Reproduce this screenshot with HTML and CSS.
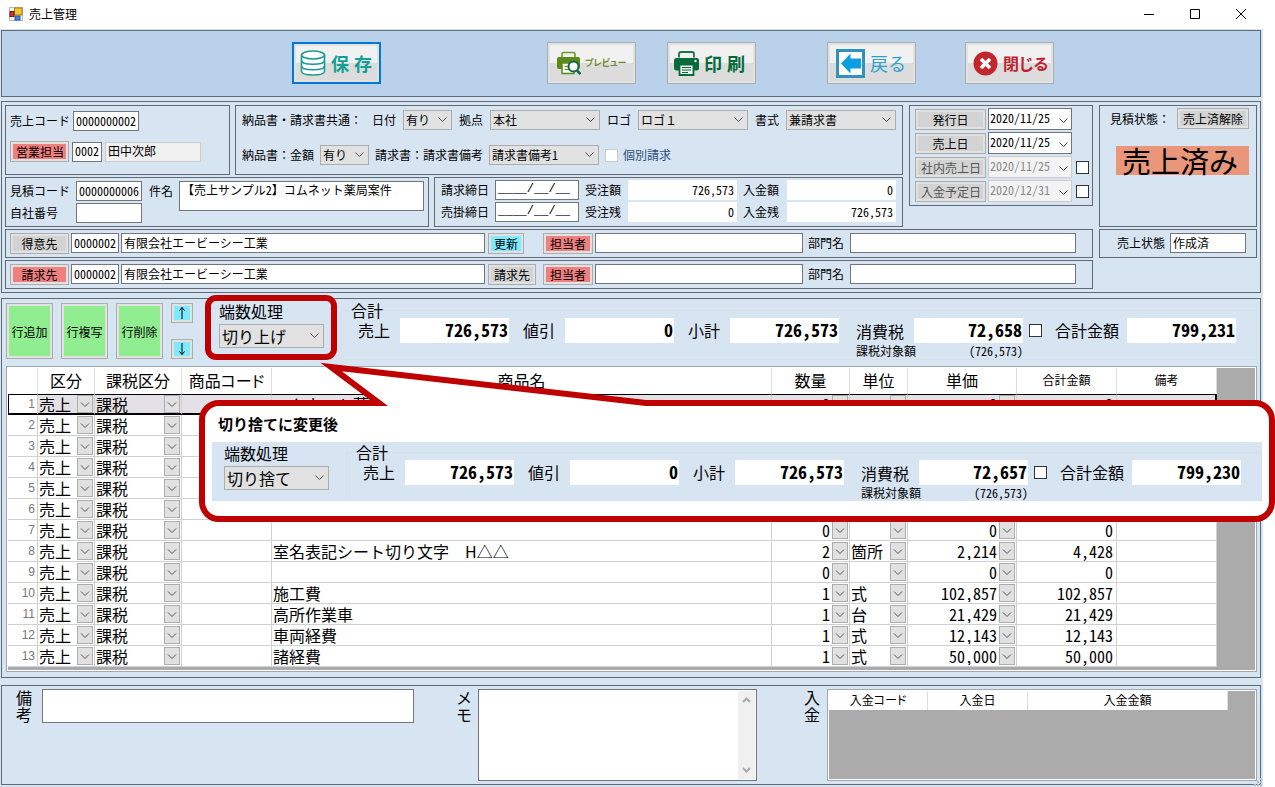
FILE: index.html
```html
<!DOCTYPE html>
<html lang="ja">
<head>
<meta charset="utf-8">
<title>売上管理</title>
<link rel="stylesheet" href="styles.css">
</head>
<body>
<div class="page">
<header class="titlebar">
  <svg class="app-icon" width="14" height="14" viewBox="0 0 14 14"><rect x=".5" y=".5" width="13" height="13" fill="#f4f4f4" stroke="#b5b5b5"/><rect x="5.500" y="1" width="7.500" height="7" fill="#f6c52b" stroke="#a87c14"/><rect x="1" y="4.500" width="4" height="5" fill="#c0392b" stroke="#7d1c12"/><rect x="6" y="9" width="5" height="4" fill="#4f86dd" stroke="#2b56a0"/></svg>
  <h1>売上管理</h1>
  <div class="window-buttons">
    <button aria-label="最小化"><svg width="12" height="12" viewBox="0 0 12 12"><path d="M1 6.500H11"/></svg></button>
    <button aria-label="最大化"><svg width="12" height="12" viewBox="0 0 12 12"><path d="M1.500 1.500H10.500V10.500H1.500Z"/></svg></button>
    <button aria-label="閉じる"><svg width="12" height="12" viewBox="0 0 12 12"><path d="M1 1L11 11M11 1L1 11"/></svg></button>
  </div>
</header>

<main class="window">
<nav class="toolbar">
  <button class="tool tool-save"><svg width="26" height="26" viewBox="0 0 26 26" fill="#fff" stroke="#1a9c92" stroke-width="1.600"><path d="M1.500 5V21C1.500 23.500 6 25 13 25S24.500 23.500 24.500 21V5"/><path d="M1.500 10.500C1.500 13 6 14.200 13 14.200S24.500 13 24.500 10.500M1.500 16C1.500 18.500 6 19.700 13 19.700S24.500 18.500 24.500 16" fill="none"/><ellipse cx="13" cy="5" rx="11.500" ry="4"/></svg><span>保</span><span>存</span></button>
  <button class="tool tool-preview"><svg width="24" height="24" viewBox="0 0 24 24"><path d="M5 6V3Q5 1.500 6.500 1.500H16.500Q18 1.500 18 3V6" fill="none" stroke="#6d9a2c" stroke-width="1.600"/><rect x="0" y="6" width="23" height="12" rx="2" fill="#5d8a1c"/><path d="M5 12H17V22.500H5Z" fill="#f5f7ee" stroke="#5d8a1c" stroke-width="1.500"/><path d="M7.500 15.500H12M7.500 18.500H12" stroke="#5d8a1c"/><circle cx="16.500" cy="15.500" r="5" fill="#fff" stroke="#0e6b42" stroke-width="2"/><path d="M20 19.500L23.500 23" stroke="#0e6b42" stroke-width="2.500"/></svg><span>プレビュー</span></button>
  <button class="tool tool-print"><svg width="25" height="25" viewBox="0 0 25 25"><path d="M5 6.500V3Q5 1 7 1H18Q20 1 20 3V6.500" fill="none" stroke="#17764a" stroke-width="1.800"/><rect x="0" y="7" width="25" height="12.500" rx="2.500" fill="#066a3a"/><circle cx="21.500" cy="10" r="1.200" fill="#fff"/><path d="M5.500 13.500H19.500V24H5.500Z" fill="#eef4ef" stroke="#066a3a" stroke-width="1.800"/><path d="M8 16.500H17M8 19H17M8 21.500H14" stroke="#066a3a"/></svg><span>印</span><span>刷</span></button>
  <button class="tool tool-back"><svg width="29" height="29" viewBox="0 0 29 29"><rect x="1.500" y="1.500" width="26" height="26" fill="#fff" stroke="#2f94bd" stroke-width="3"/><path d="M5 14.500L14.500 4.500V9.500H25V19.500H14.500V24.500Z" fill="#0b9ee0"/></svg><span>戻る</span></button>
  <button class="tool tool-close"><svg width="25" height="25" viewBox="0 0 25 25"><circle cx="12.500" cy="12.500" r="12" fill="#c1272d"/><path d="M8 8L17 17M17 8L8 17" stroke="#fff" stroke-width="3.600"/></svg><span>閉じる</span></button>
</nav>

<section class="panel header-panel">
  <div class="header-main">
    <div class="header-top">
      <div class="header-left">
        <div class="header-line">
          <div class="box box-code">
            <div class="line"><label for="sales-code">売上コード</label><input id="sales-code" class="w66 num" value="0000000002"></div>
            <div class="line"><button class="btn red w59">営業担当</button><input class="w30 num" aria-label="営業担当コード" value="0002"><input class="readonly w96" aria-label="営業担当名" readonly value="田中次郎"></div>
          </div>
          <div class="box box-docs">
            <div class="line"><span class="doc-head">納品書・請求書共通：</span><label for="s1">日付</label><select id="s1" class="w49"><option>有り</option></select><label for="s2">拠点</label><select id="s2" class="w110"><option>本社</option></select><label for="s3">ロゴ</label><select id="s3" class="w110"><option>ロゴ１</option></select><label for="s4">書式</label><select id="s4" class="w110"><option>兼請求書</option></select></div>
            <div class="line tight"><label for="s5">納品書：金額</label><select id="s5" class="w49"><option>有り</option></select><label for="s6">請求書：請求書備考</label><select id="s6" class="w110 num"><option>請求書備考1</option></select><label class="check-label"><input type="checkbox" class="light">個別請求</label></div>
          </div>
        </div>
        <div class="header-line">
          <div class="box box-estimate">
            <label for="est">見積コード</label><input id="est" class="num" value="0000000006"><label for="subject">件名</label><textarea id="subject" class="num">【売上サンプル2】コムネット薬局案件</textarea>
            <label for="own">自社番号</label><input id="own">
          </div>
          <div class="box box-balance">
            <label for="d1">請求締日</label><input id="d1" class="mask" value="____/__/__"><label for="a1">受注額</label><input id="a1" class="amount num" value="726,573"><label for="a2">入金額</label><input id="a2" class="amount num" value="0">
            <label for="d2">売掛締日</label><input id="d2" class="mask" value="____/__/__"><label for="a3">受注残</label><input id="a3" class="amount num" value="0"><label for="a4">入金残</label><input id="a4" class="amount num" value="726,573">
          </div>
        </div>
      </div>
      <div class="box box-dates">
        <div class="line"><button class="btn gray w71">発行日</button><select class="date num" aria-label="発行日"><option>2020/11/25</option></select></div>
        <div class="line"><button class="btn gray w71">売上日</button><select class="date num" aria-label="売上日"><option>2020/11/25</option></select></div>
        <div class="line"><button class="btn gray w71" disabled>社内売上日</button><select class="date num" aria-label="社内売上日" disabled><option>2020/11/25</option></select><input type="checkbox" aria-label="社内売上日を指定"></div>
        <div class="line"><button class="btn gray w71" disabled>入金予定日</button><select class="date num" aria-label="入金予定日" disabled><option>2020/12/31</option></select><input type="checkbox" aria-label="入金予定日を指定"></div>
      </div>
    </div>
    <div class="box box-party">
      <button class="btn gray w59">得意先</button><input class="w48 num" aria-label="得意先コード" value="0000002"><input class="party-name" aria-label="得意先名" value="有限会社エービーシー工業"><div class="party-action"><button class="btn cyan">更新</button></div><button class="btn red w50">担当者</button><input class="w208" aria-label="担当者"><label for="p1">部門名</label><input id="p1" class="w226">
    </div>
    <div class="box box-party">
      <button class="btn red w59">請求先</button><input class="w48 num" aria-label="請求先コード" value="0000002"><input class="party-name" aria-label="請求先名" value="有限会社エービーシー工業"><div class="party-action"><button class="btn gray">請求先</button></div><button class="btn red w50">担当者</button><input class="w208" aria-label="請求先担当者"><label for="p2">部門名</label><input id="p2" class="w226">
    </div>
  </div>
  <div class="header-side">
    <div class="box box-status">
      <div class="line"><span>見積状態：</span><button class="btn gray">売上済解除</button></div>
      <strong>売上済み</strong>
    </div>
    <div class="box box-state"><label for="state">売上状態</label><input id="state" value="作成済"></div>
  </div>
</section>

<section class="panel detail-panel">
  <div class="detail-top">
    <div class="row-buttons">
      <button class="btn green">行追加</button><button class="btn green">行複写</button><button class="btn green">行削除</button>
      <div class="arrows"><button class="btn cyan" aria-label="上へ"><svg width="10" height="14" viewBox="0 0 10 14"><path d="M5 1.500V13M2.500 4.500L5 1.500L7.500 4.500"/></svg></button><button class="btn cyan" aria-label="下へ"><svg width="10" height="14" viewBox="0 0 10 14"><path d="M5 1V12.500M2.500 9.500L5 12.500L7.500 9.500"/></svg></button></div>
    </div>
    <div class="totals">
      <div class="rounding"><label for="round1">端数処理</label><select id="round1"><option>切り上げ</option></select><div class="highlight"></div></div>
      <fieldset><legend>合計</legend>
        <div class="sums">
          <label for="t1">売上</label><input id="t1" class="num" value="726,573"><label for="t2">値引</label><input id="t2" class="num" value="0"><label for="t3">小計</label><input id="t3" class="num" value="726,573">
          <div class="tax"><label for="t4">消費税</label><input id="t4" class="num" value="72,658"><span>課税対象額</span><span class="num taxable">(726,573)</span></div>
          <input type="checkbox" aria-label="消費税を手入力"><label class="grand" for="t5">合計金額</label><input id="t5" class="num" value="799,231">
        </div>
      </fieldset>
    </div>
  </div>
  <div class="grid">
    <table class="items">
      <colgroup><col class="c30"><col class="c57"><col class="c87"><col class="c90"><col><col class="c78"><col class="c58"><col class="c109"><col class="c100"><col class="c100"></colgroup>
      <thead><tr><th></th><th>区分</th><th>課税区分</th><th>商品コード</th><th>商品名</th><th>数量</th><th>単位</th><th>単価</th><th class="small">合計金額</th><th class="small">備考</th></tr></thead>
      <tbody id="item-rows"></tbody>
    </table>
  </div>
</section>

<section class="panel notes-panel">
  <label class="vertical" for="remarks">備考</label><textarea id="remarks"></textarea>
  <label class="vertical memo-label" for="memo">メモ</label>
  <div class="memo"><textarea id="memo"></textarea><div class="scrollbar"><svg width="9" height="6" viewBox="0 0 9 6"><path d="M1 5L4.500 1.500L8 5"/></svg><svg width="9" height="6" viewBox="0 0 9 6"><path d="M1 1L4.500 4.500L8 1"/></svg></div></div>
  <span class="vertical payment-label">入金</span>
  <div class="payments"><table><colgroup><col class="c99"><col class="c100"><col></colgroup><thead><tr><th>入金コード</th><th>入金日</th><th>入金金額</th></tr></thead></table></div>
</section>
<svg class="grip" width="8" height="8" viewBox="0 0 8 8"><path d="M6 0h2v2h-2zM3 3h2v2h-2zM6 3h2v2h-2zM0 6h2v2h-2zM3 6h2v2h-2zM6 6h2v2h-2z"/></svg>
</main>

<aside class="callout">
  <svg class="tail" width="350" height="50" viewBox="311 356 350 50"><path d="M331 367L383 406H646V403Z" fill="#fff"/><path d="M387 409L331 367L646 403H650" fill="none" stroke="#bf0000" stroke-width="6" stroke-miterlimit="8"/></svg>
  <h2>切り捨てに変更後</h2>
  <div class="totals">
    <div class="rounding"><label for="round2">端数処理</label><select id="round2"><option>切り捨て</option></select></div>
    <fieldset><legend>合計</legend>
      <div class="sums">
        <label for="u1">売上</label><input id="u1" class="num" value="726,573"><label for="u2">値引</label><input id="u2" class="num" value="0"><label for="u3">小計</label><input id="u3" class="num" value="726,573">
        <div class="tax"><label for="u4">消費税</label><input id="u4" class="num" value="72,657"><span>課税対象額</span><span class="num taxable">(726,573)</span></div>
        <input type="checkbox" aria-label="変更後の消費税を手入力"><label class="grand" for="u5">合計金額</label><input id="u5" class="num" value="799,230">
      </div>
    </fieldset>
  </div>
</aside>
</div>
<script src="app.js"></script>
</body>
</html>
```
FILE: styles.css
```css
* { box-sizing: border-box; }
body { margin: 0; background: #fff; color: #000; font: 12px/16px "Noto Sans CJK JP", sans-serif; }
button, input, select, textarea { font: inherit; color: inherit; margin: 0; border-radius: 0; }
label, span, th, h1, h2, legend, button { white-space: nowrap; }
.num { font-feature-settings: "hwid"; }
.page { position: relative; }

/* title bar */
.titlebar { display: flex; align-items: center; height: 29px; padding: 0 28px 2px 9px; gap: 6px; }
.titlebar h1 { margin: 0; font-size: 12px; font-weight: 400; flex: 1; }
.window-buttons { display: flex; gap: 34px; }
.window-buttons button { display: block; border: 0; padding: 0; background: none; width: 12px; height: 12px; }
.window-buttons svg { display: block; fill: none; stroke: #000; }

.window { position: relative; margin-right: 12px; padding: 1px 2px 2px 1px; background: #d7e4f1; }
.grip { position: absolute; right: 1px; bottom: 1px; fill: #b5bcc4; }

/* toolbar */
.toolbar { display: flex; height: 67px; padding: 11px 0 0 290px; border: 1px solid #5f6a75; background: #b9d1ea; margin-bottom: 4px; }
.tool { display: flex; align-items: center; width: 89px; height: 42px; padding: 0 6px; gap: 5px; border: 1px solid #adadad; box-shadow: inset 0 0 0 2px #e1e1e1; background: linear-gradient(#f1f1f1 50%, #dcdcdc 50%); font-size: 18px; line-height: 20px; font-weight: 700; }
.tool svg { flex: none; }
.tool-save { border: 2px solid #0078d7; color: #12a195; }
.tool-preview { margin-left: 166px; padding-left: 9px; gap: 4px; font-size: 9px; color: #6d8f2c; font-feature-settings: "palt"; }
.tool-print { margin-left: 31px; color: #066a3a; }
.tool-back { margin-left: 71px; padding-left: 8px; font-weight: 400; color: #2a9fd0; }
.tool-close { margin-left: 49px; padding-left: 7px; color: #be2430; font-size: 16px; font-feature-settings: "palt"; }

/* shared controls */
.panel { border: 1px solid #5f6a75; }
.box { border: 1px solid #5f6a75; }
.line { display: flex; align-items: center; }
input, textarea { border: 1px solid #70767c; background: #fff; padding: 0 2px 2px; height: 20px; min-width: 0; outline: 0; }
textarea { resize: none; display: block; }
input.readonly { background: #f0f0f0; border: 1px solid #ccc; }
input[type=checkbox] { appearance: none; flex: none; width: 13px; height: 13px; padding: 0; border: 1px solid #333; background: #fff; }
input[type=checkbox].light { border-color: #ccc; }
select { appearance: none; height: 20px; padding: 0 16px 0 2px; border: 1px solid #adadad; background: #e1e1e1 url("data:image/svg+xml,%3Csvg xmlns='http://www.w3.org/2000/svg' width='9' height='6'%3E%3Cpath d='M.5 .5L4.500 4.500L8.500 .5' fill='none' stroke='%23555'/%3E%3C/svg%3E") no-repeat right 4px center; }
.btn { height: 21px; padding: 0 5px; border: 1px solid #adadad; box-shadow: inset 0 0 0 2px #e1e1e1; line-height: 17px; flex: none; }
.gray { background: #d3d3d3; }
.red { background: #f08080; }
.cyan { background: #7feaff; }
.green { background: #90ee90; }
.w30 { width: 30px; } .w48 { width: 48px; } .w49 { width: 49px; } .w50 { width: 50px; } .w59 { width: 59px; }
.w66 { width: 66px; } .w71 { width: 71px; } .w96 { width: 96px; } .w110 { width: 110px; }
.w208 { width: 208px; } .w226 { width: 226px; }

/* header */
.header-panel { display: flex; gap: 6px; padding: 3px; margin-bottom: 5px; }
.header-main { flex: 1; min-width: 0; display: flex; flex-direction: column; gap: 2px; }
.header-top { display: flex; align-items: flex-start; gap: 6px; }
.header-left { flex: 1; min-width: 0; display: flex; flex-direction: column; gap: 2px; }
.header-line { display: flex; gap: 5px; }
.box-code { width: 225px; height: 70px; padding: 5px 4px; display: flex; flex-direction: column; gap: 10px; }
.box-code .line { gap: 3px; }
.box-docs { flex: 1; padding: 4px 6px; display: flex; flex-direction: column; gap: 15px; }
.box-docs .line { gap: 7px; }
.box-docs .tight { gap: 6px; }
.doc-head { margin-right: 3px; }
.check-label { display: flex; align-items: center; gap: 5px; color: #2b4f7d; }
.box-estimate { width: 425px; height: 50px; padding: 3px 4px; display: grid; grid-template: 20px 20px / 66px 66px 30px 1fr; column-gap: 0; row-gap: 2px; align-items: center; }
.box-estimate label[for=subject] { margin-left: 7px; }
.box-estimate textarea { grid-row: 1 / 3; grid-column: 4; align-self: start; height: 30px; margin-left: 7px; line-height: 15px; }
.box-balance { flex: 1; padding: 2px 6px; display: grid; grid-template: 20px 20px / 54px 84px 49px 109px 50px 1fr; row-gap: 2px; align-items: center; }
.box-balance label[for^=a] { margin-left: 6px; }
.mask { font-family: "Liberation Mono", monospace; font-size: 12px; }
.amount { border-color: #fff; text-align: right; }
.box-balance .amount { width: 109px; }
.box-dates { width: 184px; padding: 2px 3px 3px 5px; display: flex; flex-direction: column; gap: 2px; }
.box-dates .line { height: 22px; gap: 2px; }
.date { width: 84px; height: 22px; background-color: #fff; border-color: #70767c; padding: 0 0 3px 1px; background-position: right 3px bottom 5px; }
.date:disabled { border-color: #ccc; color: #8a8a8a; background-color: #f3f3f3; opacity: 1; }
.btn:disabled { color: #555; }
.box-dates input[type=checkbox] { margin-left: 2px; }
.box-party { height: 29px; padding: 0 16px 1px 4px; display: flex; align-items: center; gap: 2px; }
.party-name { flex: 1; }
.party-action { width: 53px; margin-left: 1px; }
.party-action .btn { display: block; }
.box-party label { margin: 0 4px 0 3px; }
.header-side { width: 158px; display: flex; flex-direction: column; gap: 2px; }
.box-status { height: 122px; padding: 2px 7px 0 10px; }
.box-status .line { justify-content: space-between; }
.box-status strong { display: block; margin: 17px 0 0 6px; padding-left: 6px; background: #e9967a; font-size: 29px; line-height: 29px; font-weight: 400; }
.box-state { height: 29px; padding: 0 10px 1px 17px; display: flex; align-items: center; gap: 5px; }
.box-state input { flex: 1; }

/* detail */
.detail-panel { padding: 4px 3px 5px 4px; margin-bottom: 7px; }
.detail-top { display: flex; align-items: flex-start; height: 63px; }
.row-buttons { display: flex; gap: 8px; width: 213px; flex: none; }
.row-buttons .green { width: 47px; height: 56px; padding: 0; }
.arrows { display: flex; flex-direction: column; justify-content: space-between; height: 56px; }
.arrows .btn { width: 22px; height: 20px; padding: 0; display: grid; place-items: center; }
.arrows svg { fill: none; stroke: #000; }
.totals { flex: 1; display: flex; align-items: flex-start; gap: 17px; font-size: 16px; min-width: 0; }
.rounding { position: relative; width: 105px; flex: none; }
.rounding label { display: block; line-height: 16px; margin-bottom: 5px; }
.rounding select { width: 105px; height: 24px; display: block; background-position: right 4px center; line-height: 20px; }
.highlight { position: absolute; inset: -8px -13px -12px -14px; border: 6px solid #bf0000; border-radius: 11px; pointer-events: none; }
fieldset { flex: 1; min-width: 0; height: 58px; margin: -1px 0 0; padding: 0 8px; border: 1px solid #d9dfe5; }
legend { padding: 0 1px; line-height: 16px; }
.sums { display: flex; align-items: flex-start; padding-left: 8px; }
.sums > label { width: 42px; line-height: 25px; margin-left: 14px; }
.sums > label:first-child { margin-left: 0; }
.sums input.num { width: 109px; height: 25px; border: 0; text-align: right; font-size: 18px; font-weight: 700; line-height: 25px; padding: 0 1px 3px; }
.tax { display: grid; grid-template: 25px 16px / 58px 109px; align-items: center; margin-left: 17px; font-size: 16px; }
.tax span { font-size: 12px; line-height: 16px; }
.taxable { text-align: right; }
.sums input[type=checkbox] { margin: 6px 0 0 6px; }
.sums > .grand { width: 72px; margin-left: 13px; }

.grid { border: 1px solid #a0a8b0; padding: 1px 1px 4px 1px; background: #ababab; box-shadow: inset 0 0 0 1px #fff; }
.grid, .payments { overflow: hidden; }
table { border-collapse: separate; border-spacing: 0; table-layout: fixed; background: #fff; }
.items { width: calc(100% - 38px); font-size: 16px; }
.c30 { width: 30px; } .c57 { width: 57px; } .c87 { width: 87px; } .c90 { width: 90px; } .c78 { width: 78px; }
.c58 { width: 58px; } .c109 { width: 109px; } .c99 { width: 99px; } .c100 { width: 100px; }
th { font-weight: 400; padding: 0; border-right: 1px solid #ddd; }
.items th { height: 26px; line-height: 20px; padding-bottom: 2px; font-feature-settings: "palt"; }
.items th.small { font-size: 12px; }
.items td { height: 21px; padding: 0 1px; border-right: 1px solid #d0d0d0; border-bottom: 1px solid #d0d0d0; line-height: 18px; white-space: nowrap; overflow: hidden; }
.items .row-no { text-align: right; color: #777; font: 12px/18px "Liberation Sans", sans-serif; padding-right: 2px; }
.items .right { text-align: right; padding-right: 3px; }
.items tbody tr:first-child td { border-top: 1px solid #000; border-bottom: 2px solid #000; background: #e3e1e5; }
.items tbody tr:first-child td:first-child { border-left: 1px solid #000; background: #fff; }
.items tbody tr:first-child td:last-child { border-right: 2px solid #000; }
.items select { display: block; width: 100%; height: 18px; border: 0; padding: 0 18px 0 0; line-height: 18px; background-color: transparent; background-position: right 0 center; background-image: url("data:image/svg+xml,%3Csvg xmlns='http://www.w3.org/2000/svg' width='16' height='18'%3E%3Crect x='.5' y='.5' width='15' height='17' fill='%23e1e1e1' stroke='%23adadad'/%3E%3Cpath d='M4 7.500L8 11.500L12 7.500' fill='none' stroke='%23555'/%3E%3C/svg%3E"); }
.items select.right { text-align: right; text-align-last: right; padding-right: 18px; }

/* notes */
.notes-panel { display: flex; align-items: flex-start; height: 100px; padding: 3px 3px 0 14px; }
.vertical { width: 16px; white-space: normal; word-break: break-all; font-size: 16px; line-height: 17px; margin-right: 10px; }
#remarks { width: 372px; height: 34px; }
.memo-label { margin-left: 42px; margin-right: 6px; }
.memo { display: flex; flex: 1; height: 92px; border: 1px solid #70767c; background: #fff; padding: 1px; }
.memo textarea { flex: 1; height: 100%; border: 0; }
.scrollbar { width: 17px; background: #f0f0f0; display: flex; flex-direction: column; align-items: center; justify-content: space-between; padding: 6px 0; }
.scrollbar svg { fill: none; stroke: #aaa; stroke-width: 2; }
.payment-label { margin-left: 47px; margin-right: 7px; }
.payments { width: 430px; height: 92px; border: 1px solid #a0a8b0; box-shadow: inset 0 0 0 1px #fff; background: #ababab; padding: 1px; }
.payments table { width: calc(100% - 27px); }
.payments th { height: 19px; line-height: 16px; padding-bottom: 2px; font-feature-settings: "palt"; }

/* callout */
.callout { position: absolute; top: 400px; left: 199px; right: 0; height: 122px; border: 6px solid #bf0000; border-radius: 20px; background: #fff; padding: 10px 7px 0; }
.tail { position: absolute; left: 106px; top: -50px; }
.callout h2 { margin: 0 0 10px 6px; font-size: 15px; line-height: 16px; font-weight: 700; }
.callout .totals { height: 59px; padding: 3px 0 0 12px; background: #d7e4f1; }
.callout fieldset { height: 56px; border-bottom: 0; }
```
FILE: app.js
```js
const items = [
  ["コムネット薬", "0", "", "0", "0"],
  ["", "", "", "", ""],
  ["", "", "", "", ""],
  ["", "", "", "", ""],
  ["", "", "", "", ""],
  ["", "", "", "", ""],
  ["", "0", "", "0", "0"],
  ["室名表記シート切り文字　H△△", "2", "箇所", "2,214", "4,428"],
  ["", "0", "", "0", "0"],
  ["施工費", "1", "式", "102,857", "102,857"],
  ["高所作業車", "1", "台", "21,429", "21,429"],
  ["車両経費", "1", "式", "12,143", "12,143"],
  ["諸経費", "1", "式", "50,000", "50,000"],
];

const combo = (label, value, cls = "") =>
  `<td><select class="${cls}" aria-label="${label}"><option>${value}</option></select></td>`;

document.getElementById("item-rows").innerHTML = items.map(([name, qty, unit, price, total], i) =>
  `<tr><td class="row-no">${i + 1}</td>${combo("区分", "売上")}${combo("課税区分", "課税")}<td></td><td>${name}</td>` +
  `${combo("数量", qty, "right num")}${combo("単位", unit)}${combo("単価", price, "right num")}` +
  `<td class="right num">${total}</td><td></td></tr>`).join("");
```
